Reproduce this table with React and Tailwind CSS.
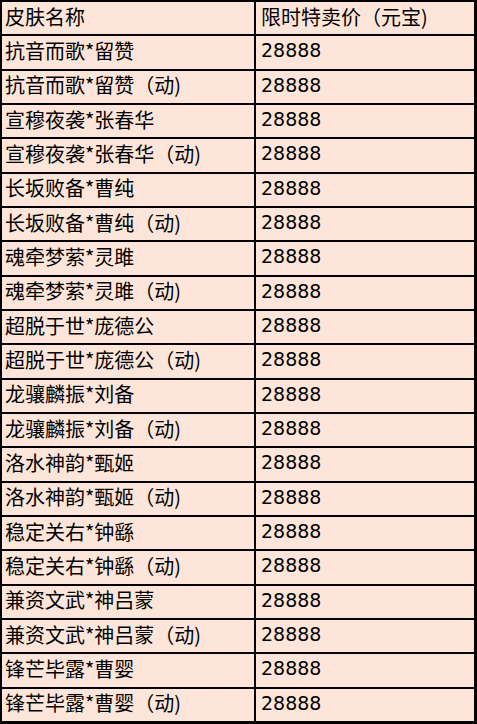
import React from 'react';

const skins = [
  '抗音而歌*留赞',
  '抗音而歌*留赞（动)',
  '宣穆夜袭*张春华',
  '宣穆夜袭*张春华（动)',
  '长坂败备*曹纯',
  '长坂败备*曹纯（动)',
  '魂牵梦萦*灵雎',
  '魂牵梦萦*灵雎（动)',
  '超脱于世*庞德公',
  '超脱于世*庞德公（动)',
  '龙骧麟振*刘备',
  '龙骧麟振*刘备（动)',
  '洛水神韵*甄姬',
  '洛水神韵*甄姬（动)',
  '稳定关右*钟繇',
  '稳定关右*钟繇（动)',
  '兼资文武*神吕蒙',
  '兼资文武*神吕蒙（动)',
  '锋芒毕露*曹婴',
  '锋芒毕露*曹婴（动)',
];

// one table row: name | price
function Row({ name, price, first, digits }) {
  return (
    <div className={`flex flex-1 ${first ? '' : 'border-t-2 border-black'}`}>
      <div className="w-[254px] border-r-2 border-black pl-[3px] flex items-center pb-[3px]">
        {name}
      </div>
      <div
        className={`flex-1 pl-[5px] flex items-center pb-[3px] ${digits ? 'text-[19px]' : ''}`}
        style={digits ? { fontFamily: '"DejaVu Sans", sans-serif' } : undefined}
      >
        {price}
      </div>
    </div>
  );
}

export default function App() {
  return (
    <div
      className="w-[477px] h-[724px] bg-[#fde5d9] text-black text-[20px] leading-none border-t-2 border-l-2 border-r-[3px] border-b-[3px] border-black flex flex-col"
      style={{ fontFamily: '"Noto Sans CJK SC", "Noto Sans", sans-serif' }}
    >
      <Row first name="皮肤名称" price="限时特卖价（元宝)" />
      {skins.map((s) => (
        <Row key={s} name={s} price="28888" digits />
      ))}
    </div>
  );
}
